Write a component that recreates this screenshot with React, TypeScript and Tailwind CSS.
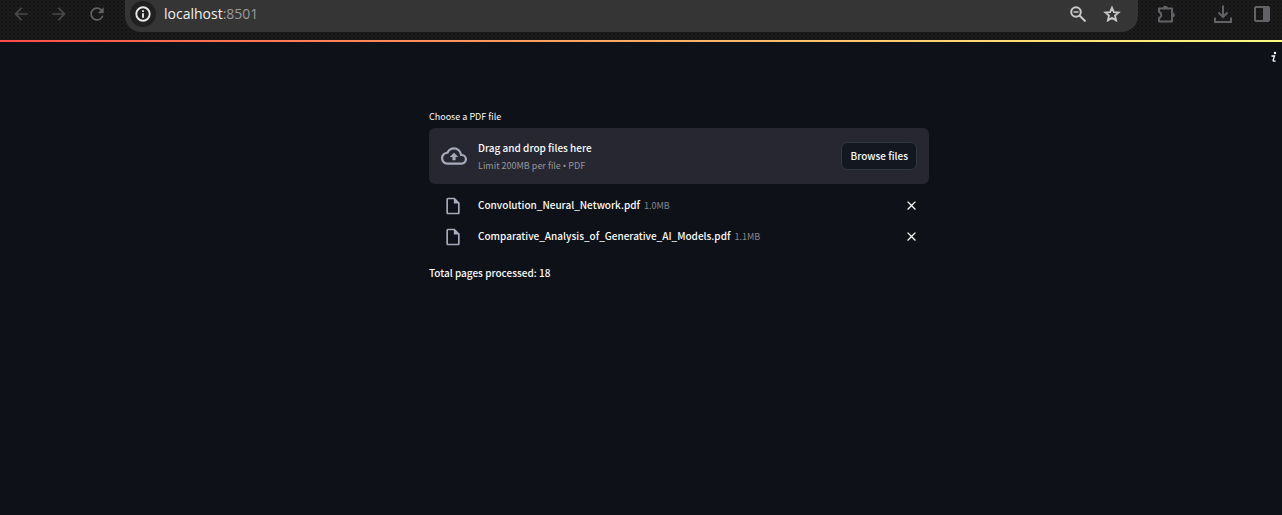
import React from "react";
import {
  MdArrowBack,
  MdArrowForward,
  MdRefresh,
  MdOutlineCloudUpload,
  MdOutlineInsertDriveFile,
  MdClose,
} from "react-icons/md";

const files = [
  { name: "Convolution_Neural_Network.pdf", size: "1.0MB" },
  { name: "Comparative_Analysis_of_Generative_AI_Models.pdf", size: "1.1MB" },
];

function InfoIcon() {
  return (
    <svg className="size-[18px]" viewBox="0 0 18 18" fill="none" stroke="currentColor" strokeWidth="1.900" aria-hidden="true">
      <circle cx="9" cy="9" r="6.700" />
      <path d="M9 8.200V12.800M9 5.200V7" />
    </svg>
  );
}

function ZoomOutIcon() {
  return (
    <svg className="size-5" viewBox="0 0 20 20" fill="none" stroke="currentColor" strokeWidth="2" aria-hidden="true">
      <circle cx="8" cy="8" r="4.800" />
      <path d="M11.500 11.500L17.500 17.500" />
      <path d="M5.500 8H10.500" strokeWidth="1.500" />
    </svg>
  );
}

function StarIcon() {
  return (
    <svg className="size-5" viewBox="0 0 24 24" fill="none" stroke="currentColor" strokeWidth="2.200" aria-hidden="true">
      <path d="M12 4.500L14.200 9.800L19.900 10.300L15.600 14L16.900 19.600L12 16.700L7.100 19.600L8.400 14L4.100 10.300L9.800 9.800Z" />
    </svg>
  );
}

function ExtensionIcon() {
  return (
    <svg className="size-5" viewBox="0 0 20 20" fill="none" stroke="currentColor" strokeWidth="2" strokeLinejoin="round" aria-hidden="true">
      <path d="M3 4.500H16V17.500H3V14C6 13.200 6 8.800 3 8Z" />
      <path d="M6.500 4.200C7 .9 11.500 .9 12 4.200ZM16.200 8.500C19.700 8.500 19.700 13.500 16.200 13.500Z" fill="currentColor" stroke="none" />
    </svg>
  );
}

function DownloadIcon() {
  return (
    <svg className="size-5" viewBox="0 0 20 20" fill="none" stroke="currentColor" strokeWidth="2" aria-hidden="true">
      <path d="M10 1.500V13M5.500 8.500L10 13L14.500 8.500M2 13.500V18H18V13.500" />
    </svg>
  );
}

function SidePanelIcon() {
  return (
    <svg className="size-5" viewBox="0 0 20 20" fill="none" stroke="currentColor" strokeWidth="2" aria-hidden="true">
      <rect x="3" y="3" width="14" height="14" rx="1" />
      <path d="M11 3H17V17H11Z" fill="currentColor" stroke="none" />
    </svg>
  );
}

function BrowserBar() {
  return (
    <header className="flex h-10 items-start bg-[#1d1d1d] bg-[radial-gradient(#121212_1px,transparent_1px),radial-gradient(#171717_1px,transparent_1px)] bg-[size:4px_4px] bg-[position:0_0,2px_2px] text-[#606266]">
      <nav className="flex h-7 w-[125px] shrink-0 items-center gap-[18px] pl-[11px]">
        <button aria-label="Back" className="text-[#48494b]"><MdArrowBack className="size-5" /></button>
        <button aria-label="Forward" className="text-[#48494b]"><MdArrowForward className="size-5" /></button>
        <button aria-label="Reload"><MdRefresh className="size-5" /></button>
      </nav>
      <div className="flex h-8 min-w-0 flex-1 items-start rounded-b-2xl bg-[#353535] pr-4 pl-[5px]">
        <div className="flex h-7 w-full items-center">
          <button aria-label="Site information" className="flex size-[26px] items-center justify-center rounded-full bg-[#202020] text-[#e8e8e8]">
            <InfoIcon />
          </button>
          <p className="ml-2 flex-1 font-['Open_Sans',sans-serif] text-sm text-[#9a9a9a]">
            <span className="text-[#f0f0f0]">localhost</span>:8501
          </p>
          <div className="flex gap-[14px] text-[#c9c9c9]">
            <button aria-label="Zoom"><ZoomOutIcon /></button>
            <button aria-label="Bookmark"><StarIcon /></button>
          </div>
        </div>
      </div>
      <div className="flex h-7 shrink-0 items-center pr-[10px] pl-[18px]">
        <button aria-label="Extensions"><ExtensionIcon /></button>
        <button aria-label="Downloads" className="ml-[37px]"><DownloadIcon /></button>
        <button aria-label="Side panel" className="ml-[19px]"><SidePanelIcon /></button>
      </div>
    </header>
  );
}

export default function App() {
  return (
    <div className="flex min-h-screen flex-col bg-[#0e1117] font-['Noto_Sans_CJK_SC',sans-serif] text-[#fafafa]">
      <BrowserBar />
      <div className="h-[2px] bg-linear-to-r from-[#ff4b4b] to-[#fffd80]" />
      <div className="flex h-[30px] items-center justify-end pr-1">
        <button aria-label="Menu">
          <svg className="h-3 w-2" viewBox="0 0 8 12" fill="none" stroke="currentColor" strokeWidth="1.300" aria-hidden="true">
            <circle cx="5" cy="2" r="1.200" fill="currentColor" stroke="none" />
            <path d="M1.500 5H4.500L3 9.500Q3 10.500 5.500 10" />
          </svg>
        </button>
      </div>
      <main className="flex flex-1 justify-center pt-9 pr-4 pl-[92px]">
        <div className="w-full max-w-[500px]">
          <label htmlFor="pdf" className="block h-5 text-[9px] leading-[18px]">Choose a PDF file</label>
          <section className="flex h-14 items-center rounded-md bg-[#262730] px-3">
            <MdOutlineCloudUpload className="size-[26px] shrink-0 text-[#a9abbd]" />
            <div className="ml-[11px] flex-1 pt-[2px]">
              <p className="text-[10px] leading-[18px] font-medium">Drag and drop files here</p>
              <p className="text-[9px] leading-[18px] text-[#96979c]">
                Limit 200MB per file <span className="font-['Noto_Sans',sans-serif]">•</span> PDF
              </p>
            </div>
            <button id="pdf" className="h-7 rounded-md border border-[#343740] bg-[#131720] px-2 text-[10px] leading-5 font-medium">Browse files</button>
          </section>
          <ul className="pt-[6px]">
            {files.map((file) => (
              <li key={file.name} className="flex h-[31px] items-center pr-[10px] pl-[14px]">
                <MdOutlineInsertDriveFile className="size-5 shrink-0 text-[#a9abbd]" />
                <p className="ml-[15px] flex h-5 flex-1 items-baseline leading-[18px]">
                  <span className="text-[10px] font-medium">{file.name}</span>
                  <span className="ml-1 text-[9px] text-[#86888d]">{file.size}</span>
                </p>
                <button aria-label={`Remove ${file.name}`}><MdClose className="size-[15px]" /></button>
              </li>
            ))}
          </ul>
          <p className="pt-3 text-[10px] leading-[18px] font-medium">Total pages processed: 18</p>
        </div>
      </main>
    </div>
  );
}
